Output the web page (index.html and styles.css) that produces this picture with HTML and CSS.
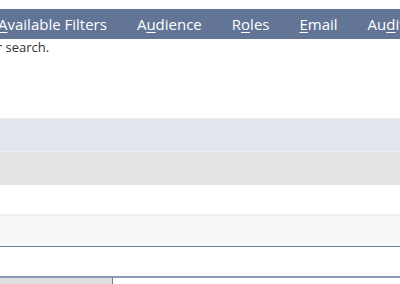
FILE: index.html
```html
<!DOCTYPE html>
<html lang="en">

<head>
    <meta charset="UTF-8">
    <meta name="viewport" content="width=device-width, initial-scale=1.0">
    <title>Available Filters</title>
    <link rel="stylesheet" href="styles.css">
</head>

<body>

    <div class="tabs">
        <span class="tab"><u>A</u>vailable Filters</span>
        <span class="tab">A<u>u</u>dience</span>
        <span class="tab">R<u>o</u>les</span>
        <span class="tab"><u>E</u>mail</span>
        <span class="tab">Au<u>d</u>it</span>
    </div>

    <p class="hint">or search.</p>

    <div class="grid">
        <div class="row row-head"></div>
        <div class="row row-gray"></div>
        <div class="gap"></div>
        <div class="row row-light"></div>
        <div class="gap"></div>
        <div class="footer">
            <div class="foot-left"></div>
            <div class="foot-right"></div>
        </div>
    </div>

</body>

</html>
```

FILE: styles.css
```css
body {
    font-family: "Open Sans", "Liberation Sans", sans-serif;
    margin: 0;
    padding: 0;
    background-color: #ffffff;
    overflow: hidden;
}

.tabs {
    margin-top: 9px;
    height: 30px;
    background-color: #627596;
    display: flex;
    align-items: center;
    white-space: nowrap;
    margin-left: -2px;
    overflow: hidden;
}

.tab {
    color: #ffffff;
    font-size: 15px;
    padding: 0 15px;
}

.tab:first-child {
    padding-left: 0;
}

.tab u {
    text-decoration-thickness: 1px;
    text-underline-offset: 2px;
}

.hint {
    margin: 0 0 0 -11px;
    font-size: 13px;
    color: #333333;
    line-height: 16px;
}

.grid {
    margin-top: 63px;
}

.row {
    height: 32px;
    border-top: 1px solid #eeeeee;
}

.row-head {
    background-color: #e0e5ee;
}

.row-gray {
    background-color: #e4e4e4;
    height: 33px;
}

.row-light {
    background-color: #f8f8f8;
    height: 30px;
    border-top: 2px solid #eeeeee;
    border-bottom: 1px solid #6d7fa0;
}

.gap {
    height: 29px;
}

.footer {
    display: flex;
    height: 10px;
}

.foot-left {
    width: 112px;
    background-color: #dddddd;
    border-top: 2px solid #8a9ab5;
}

.foot-right {
    flex: 1;
    border-top: 2px solid #8a9ab5;
    border-left: 1px solid #6d7fa0;
}
```
